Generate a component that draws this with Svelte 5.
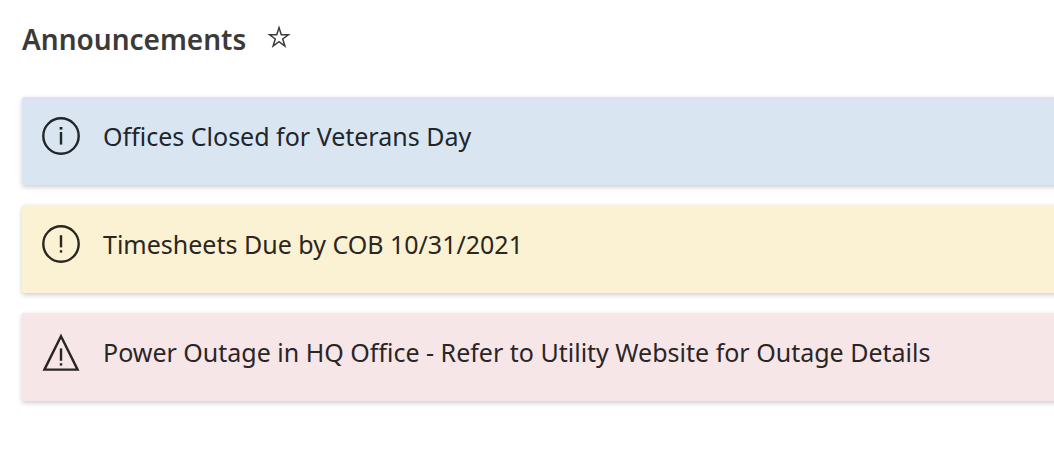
<script>
    const announcements = [
        { type: 'info', title: 'Offices Closed for Veterans Day' },
        { type: 'warning', title: 'Timesheets Due by COB 10/31/2021' },
        { type: 'urgent', title: 'Power Outage in HQ Office - Refer to Utility Website for Outage Details' }
    ];

    let following = $state(false);
</script>

<main>
    <header>
        <h1>Announcements</h1>
        <button type="button" aria-label="Follow announcements" aria-pressed={following} onclick={() => following = !following}>
            <svg width="24" height="24" viewBox="0 0 24 24">
                <path class:filled={following} d="M12 2.6L14.3 9.8H21.4L15.7 14L17.9 21.1L12 16.7L6.1 21.1L8.3 14L2.6 9.8H9.7Z" />
            </svg>
        </button>
    </header>

    <ul>
        {#each announcements as item}
            <li class={item.type}>
                <svg width="40" height="40" viewBox="0 0 40 40" aria-hidden="true">
                    {#if item.type === 'info'}
                        <circle cx="20" cy="20" r="17.7" />
                        <path d="M20 16V28.6" />
                        <rect x="18.6" y="11" width="2.8" height="2.6" />
                    {:else if item.type === 'warning'}
                        <circle cx="20" cy="20" r="17.7" />
                        <path d="M20 11.2V23.4" />
                        <rect x="18.8" y="26.2" width="2.4" height="2.4" />
                    {:else}
                        <path d="M20 4.2L36.6 37.6H3.4Z" />
                        <path d="M20 16.4V28.8" />
                        <rect x="18.8" y="31.2" width="2.4" height="2.4" />
                    {/if}
                </svg>
                <span>{item.title}</span>
            </li>
        {/each}
    </ul>
</main>

<style>
    :global(body) {
        margin: 0;
        background: #fff;
    }
    main {
        padding: 19px 0 56px 22px;
        font-family: "Segoe UI", "Noto Sans", "Open Sans", sans-serif;
        overflow-x: hidden;
    }
    header {
        display: flex;
        align-items: center;
        gap: 21px;
        padding-bottom: 38px;
    }
    h1 {
        margin: 0;
        font-size: 28px;
        line-height: 40px;
        font-weight: 600;
        color: #3b3a39;
    }
    button {
        display: flex;
        padding: 0 0 4px;
        border: 0;
        background: none;
        cursor: pointer;
    }
    button path {
        fill: none;
        stroke: #3b3a39;
        stroke-width: 1.5;
    }
    button path.filled {
        fill: #3b3a39;
    }
    ul {
        display: flex;
        flex-direction: column;
        gap: 20px;
        margin: 0;
        padding: 0;
        list-style: none;
    }
    li {
        display: flex;
        align-items: center;
        gap: 22px;
        margin-right: -8px;
        padding: 19px 28px 29px 19px;
        border-radius: 2px;
        box-shadow: 0 2px 5px rgba(0, 0, 0, 0.2);
        font-size: 25px;
        line-height: 40px;
    }
    li svg {
        flex: none;
    }
    li circle,
    li path {
        fill: none;
        stroke: currentColor;
        stroke-width: 2.4;
    }
    li rect {
        fill: currentColor;
    }
    .info {
        background: linear-gradient(#dee1f3, #d9e6f2 8px);
        color: #20262b;
    }
    .warning {
        background: #fbf2d3;
        color: #2b2620;
    }
    .urgent {
        background: #f6e6e8;
        color: #2b2526;
    }
</style>
